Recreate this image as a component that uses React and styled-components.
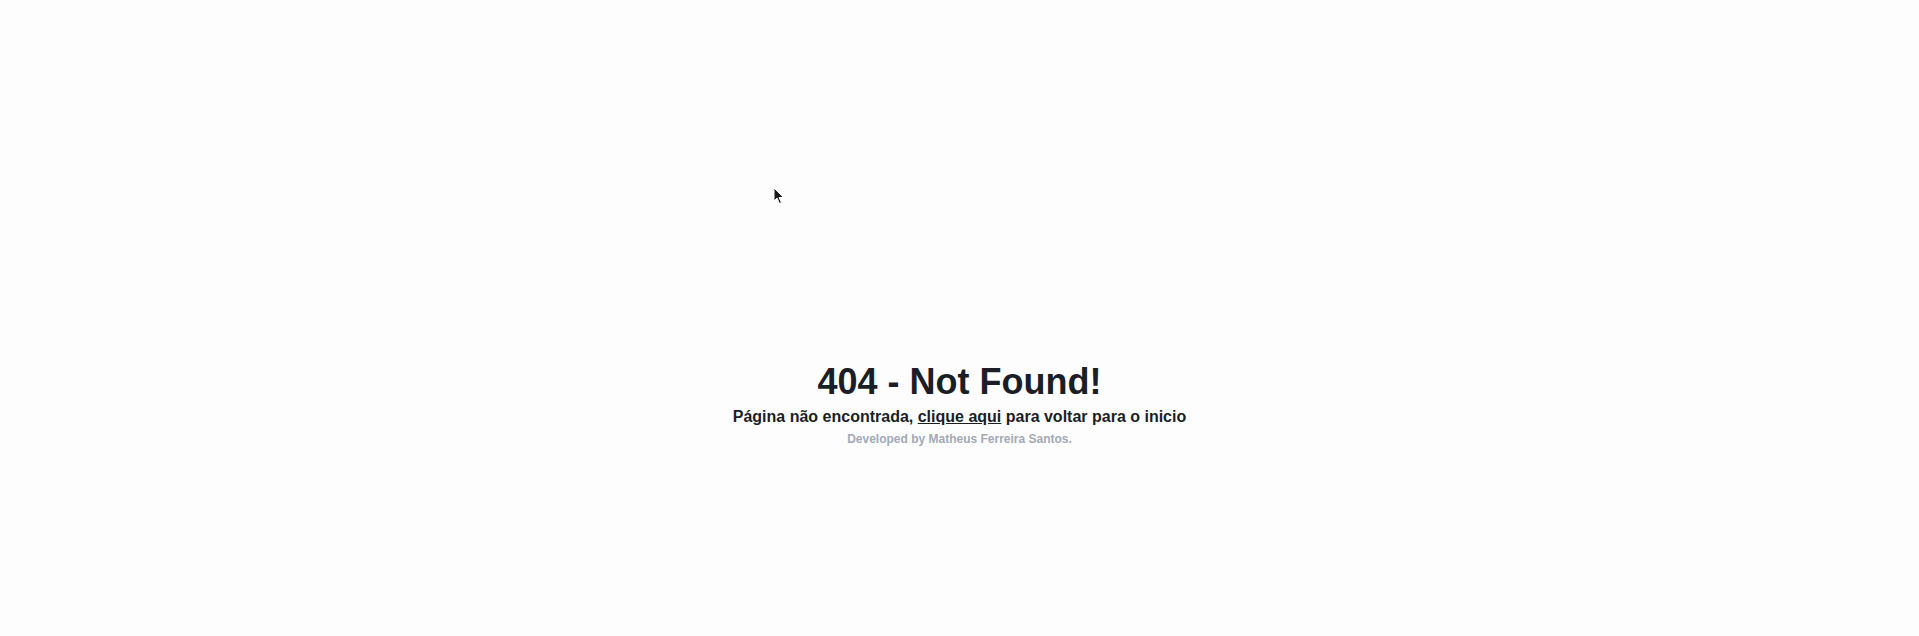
import React from "react";
import styled, { createGlobalStyle } from "styled-components";

const GlobalStyle = createGlobalStyle`
  html, body {
    margin: 0;
    padding: 0;
    background: #fdfdfd;
    font-family: "Liberation Sans", Arial, sans-serif;
  }
`;

const Page = styled.main`
  position: relative;
  width: 100vw;
  height: 100vh;
  box-sizing: border-box;
  display: flex;
  flex-direction: column;
  align-items: center;
  padding-top: 361px;
  background-color: #fdfdfd;
  overflow: hidden;
`;

const Title = styled.h1`
  margin: 0;
  font-size: 36px;
  line-height: 41px;
  font-weight: 700;
  color: #1b1e27;
`;

const Message = styled.p`
  margin: 3px 0 0;
  font-size: 16px;
  line-height: 24px;
  font-weight: 700;
  color: #1b1e27;
`;

const BackLink = styled.a`
  color: inherit;
  text-decoration: underline;
  cursor: pointer;
`;

const Credits = styled.span`
  margin-top: 2px;
  font-size: 12px;
  line-height: 16px;
  font-weight: 700;
  color: #a3a9b6;
`;

const Pointer = styled.svg`
  position: absolute;
  left: 773px;
  top: 187px;
  width: 12px;
  height: 18px;
`;

const App = () => {
  return (
    <>
      <GlobalStyle />
      <Page>
        <Title>404 - Not Found!</Title>
        <Message>
          Página não encontrada, <BackLink href="/">clique aqui</BackLink> para
          voltar para o inicio
        </Message>
        <Credits>Developed by Matheus Ferreira Santos.</Credits>
        <Pointer viewBox="0 0 12 18">
          <path
            d="M1 1 L1 14 L4 11 L6.5 16.5 L8.5 15.5 L6 10.5 L10.5 10.5 Z"
            fill="#1a1a1a"
            stroke="#ffffff"
            strokeWidth="1"
            strokeLinejoin="round"
          />
        </Pointer>
      </Page>
    </>
  );
};

export default App;
